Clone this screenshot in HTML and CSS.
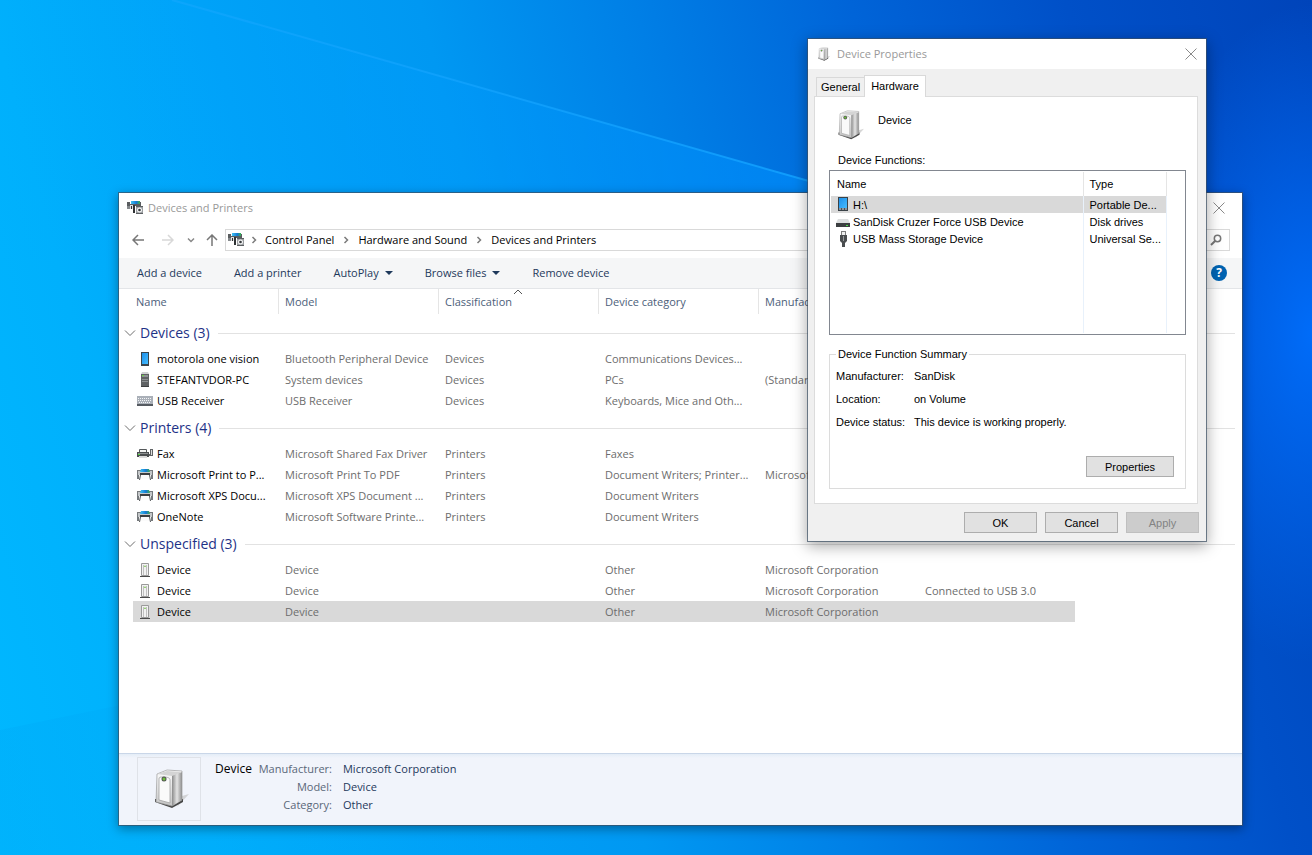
FILE: index.html
```html
<!DOCTYPE html>
<html lang="en">
<head>
    <meta charset="UTF-8">
    <meta name="viewport" content="width=device-width, initial-scale=1.0">
    <title>Devices and Printers</title>
    <link rel="stylesheet" href="styles.css">
</head>
<body>

    <!-- shared icons -->
    <svg class="sprite" aria-hidden="true">
        <defs>
            <linearGradient id="blue-screen" x1="0" y1="0" x2="1" y2="1">
                <stop offset="0" stop-color="#1e8fe8"/>
                <stop offset="1" stop-color="#45bcff"/>
            </linearGradient>
            <linearGradient id="metal" x1="0" y1="0" x2="0" y2="1">
                <stop offset="0" stop-color="#ffffff"/>
                <stop offset="1" stop-color="#c4c4c4"/>
            </linearGradient>
            <linearGradient id="metal-side" x1="0" y1="0" x2="1" y2="0">
                <stop offset="0" stop-color="#8c8c8c"/>
                <stop offset="0.5" stop-color="#e4e4e4"/>
                <stop offset="1" stop-color="#8f8f8f"/>
            </linearGradient>
            <linearGradient id="paper" x1="0" y1="0" x2="1" y2="0">
                <stop offset="0" stop-color="#3fc3f2"/>
                <stop offset="0.6" stop-color="#1477d4"/>
                <stop offset="1" stop-color="#3cb34a"/>
            </linearGradient>
        </defs>
        <symbol id="i-hub" viewBox="0 0 16 16">
            <rect x="4" y="1" width="9" height="3" fill="url(#paper)"/>
            <path d="M0 2h3v2h10V2h1v4H0z" fill="#5a5d60"/>
            <path d="M0 6h3v3H0z" fill="#85898c"/>
            <path d="M3 5h3v4H3z" fill="#dfe1e2"/>
            <rect x="6" y="5" width="2" height="8" fill="#2f3234"/>
            <rect x="4" y="6" width="1" height="3" fill="#2f3234"/>
            <rect x="9" y="6" width="7" height="8" fill="#9a9da0"/>
            <path d="M9 6h7v1H9zM9 13h7v1H9z" fill="#5c5f62"/>
            <circle cx="12.500" cy="10" r="2.500" fill="#f4f5f5"/>
            <circle cx="12.500" cy="10" r="1.300" fill="#35383b"/>
        </symbol>
        <symbol id="i-phone" viewBox="0 0 16 16">
            <rect x="4" y="1" width="8" height="14" fill="#3a444b"/>
            <rect x="5" y="2" width="6" height="11" fill="url(#blue-screen)"/>
        </symbol>
        <symbol id="i-pc" viewBox="0 0 16 16">
            <path d="M4 2l1-2h6l1 2z" fill="#cfd1d2"/>
            <rect x="4" y="2" width="8" height="13" fill="#5f6264"/>
            <path d="M5 3h6v2H5zM5 7h6v1H5zM5 9h6v1H5z" fill="#8d9193"/>
            <rect x="5" y="3" width="2" height="1" fill="#67d443"/>
            <rect x="4" y="14" width="8" height="1" fill="#3d3f40"/>
        </symbol>
        <symbol id="i-keyboard" viewBox="0 0 16 16">
            <rect x="0" y="3" width="16" height="9" fill="#aab0b8"/>
            <path d="M1 5.500h14M1 7.500h14M2 9.500h12" stroke="#f4f5f7" stroke-dasharray="1 1"/>
            <rect x="0" y="11" width="16" height="2" fill="#555a61"/>
        </symbol>
        <symbol id="i-fax" viewBox="0 0 16 16">
            <path d="M2.500 3.500h7v3h-7z" fill="#f2f3f3" stroke="#54585a"/>
            <path d="M0 6h12v5H0z" fill="#4a4d4f"/>
            <path d="M1 7h10v1H1z" fill="#8b8f91"/>
            <rect x="2" y="10" width="8" height="2" fill="#dadada"/>
            <rect x="1" y="8" width="2" height="1" fill="#5ad644"/>
            <path d="M12 8h1V3h3v7h-4z" fill="#606365"/>
            <rect x="14" y="4" width="1" height="5" fill="#dcdcdc"/>
        </symbol>
        <symbol id="i-printer" viewBox="0 0 16 16">
            <path d="M0 3h4v1H2v8H0zM12 3h4v9h-2V4h-2z" fill="#75797c"/>
            <path d="M1 4h14v4H1z" fill="#c3c6c8"/>
            <path d="M4 2h8l1 3H3z" fill="url(#paper)"/>
            <path d="M3 6h10v2H3z" fill="#3b3e40"/>
            <path d="M4 8h8l1 4H3z" fill="#fbfbfb"/>
            <path d="M3 8l1 0-1 5H2zM12 8h1l1 5h-1z" fill="#55585a"/>
        </symbol>
        <symbol id="i-drivebox" viewBox="0 0 16 16">
            <path d="M4.500 1.500h7v12h-7z" fill="#f2f2f2" stroke="#9a9a9a"/>
            <path d="M6 3h1v10H6zM9 3h1v10H9z" fill="#c0c0c0"/>
            <path d="M7 5l1-2 1 2z" fill="#7ac74c"/>
            <path d="M3 14h10v1H3z" fill="#4b4b4b"/>
        </symbol>
        <symbol id="i-box" viewBox="0 0 36 40">
            <path d="M24 38l12-13-7 2z" fill="#c5c5c5" opacity=".7"/>
            <path d="M2 33l17 6 11-6v-3H2z" fill="#474747"/>
            <path d="M4 5L14 1l15 1v29l-10 6-16-4z" fill="url(#metal)" stroke="#9a9a9a" stroke-width=".7"/>
            <path d="M19 6l10-3v28l-10 6z" fill="url(#metal-side)"/>
            <path d="M4 5l15 2 10-4-15-1z" fill="#d4d4d4"/>
            <path d="M6 10c0-2 1-2 4-2 5 0 7 1 7 3v23L6 31z" fill="#fafafa" stroke="#a2a2a2" stroke-width=".8"/>
            <circle cx="11" cy="10" r="2.500" fill="#555"/>
            <circle cx="11" cy="10" r="1.500" fill="#6fc23c"/>
        </symbol>
        <symbol id="i-portable" viewBox="0 0 16 16">
            <rect x="3" y="0" width="10" height="14" fill="#3a4248"/>
            <rect x="4" y="1" width="8" height="10" fill="url(#blue-screen)"/>
            <path d="M4 11h8v2H4z" fill="#8f969b"/>
            <path d="M6 11h1v2H6zM9 11h1v2H9z" fill="#4a5157"/>
        </symbol>
        <symbol id="i-disk" viewBox="0 0 16 16">
            <path d="M3 5h10l2 4H1z" fill="#dcdedf"/>
            <rect x="1" y="9" width="14" height="4" fill="#3c3f41"/>
            <rect x="11" y="11" width="2" height="1" fill="#4be04b"/>
        </symbol>
        <symbol id="i-usb" viewBox="0 0 16 16">
            <rect x="6.500" y=".5" width="4" height="4" fill="#f0f0f0" stroke="#7e7e7e"/>
            <path d="M5 4h7v6l-2 2v4H7v-4l-2-2z" fill="#4a4d4f"/>
            <path d="M8 5h1v5H8z" fill="#9a9d9f"/>
        </symbol>
        <symbol id="i-close" viewBox="0 0 12 12">
            <path d="M.5.5l11 11M11.500.5l-11 11" fill="none" stroke="#8a8a8a"/>
        </symbol>
        <symbol id="i-down" viewBox="0 0 12 12">
            <path d="M1 3.500l5 5 5-5" fill="none" stroke="#6e6e6e"/>
        </symbol>
        <symbol id="i-right" viewBox="0 0 8 8">
            <path d="M2.500 1l3 3-3 3" fill="none" stroke="#7b7b7b" stroke-width="1.500"/>
        </symbol>
        <symbol id="i-caret" viewBox="0 0 8 4">
            <path d="M0 0h8L4 4z" fill="#1e395b"/>
        </symbol>
    </svg>

    <svg class="wallpaper" viewBox="0 0 1312 855" preserveAspectRatio="none" aria-hidden="true">
        <defs>
            <linearGradient id="beam" x1="0" y1="0" x2="1" y2="0">
                <stop offset="0" stop-color="#18a8ff" stop-opacity="0.5"/>
                <stop offset="1" stop-color="#12a0ff" stop-opacity="0.9"/>
            </linearGradient>
            <linearGradient id="below-beam" x1="0" y1="0" x2="1" y2="0">
                <stop offset="0" stop-color="#00a8ff" stop-opacity="0"/>
                <stop offset="1" stop-color="#0090ff" stop-opacity="0.6"/>
            </linearGradient>
            <linearGradient id="low-beam" x1="0" y1="0" x2="1" y2="0">
                <stop offset="0" stop-color="#00a4f4" stop-opacity="0.25"/>
                <stop offset="1" stop-color="#00a4f4" stop-opacity="0"/>
            </linearGradient>
        </defs>
        <path d="M172 0L830 187V260H0V0z" fill="url(#below-beam)"/>
        <path d="M172 0L830 187" stroke="url(#beam)" stroke-width="2"/>
        <path d="M0 730L300 668H600V855H0z" fill="url(#low-beam)"/>
    </svg>

    <main class="window explorer">
        <header class="titlebar">
            <svg class="icon"><use href="#i-hub"/></svg>
            <h1>Devices and Printers</h1>
            <button class="close" aria-label="Close"><svg><use href="#i-close"/></svg></button>
        </header>

        <nav class="navbar">
            <button class="arrow" aria-label="Back"><svg viewBox="0 0 12 12"><path d="M12 6H1M6 1L1 6l5 5" fill="none" stroke="#777" stroke-width="1.500"/></svg></button>
            <button class="arrow forward" aria-label="Forward"><svg viewBox="0 0 12 12"><path d="M0 6h11M6 1l5 5-5 5" fill="none" stroke="#d8d8d8" stroke-width="1.500"/></svg></button>
            <button class="arrow recent" aria-label="Recent locations"><svg viewBox="0 0 8 8"><path d="M1 2.500l3 3 3-3" fill="none" stroke="#888" stroke-width="1.500"/></svg></button>
            <button class="arrow" aria-label="Up"><svg viewBox="0 0 12 12"><path d="M6 12V1M1 6l5-5 5 5" fill="none" stroke="#777" stroke-width="1.500"/></svg></button>
            <div class="address">
                <svg class="icon"><use href="#i-hub"/></svg>
                <svg class="chevron"><use href="#i-right"/></svg>
                <a href="#">Control Panel</a>
                <svg class="chevron"><use href="#i-right"/></svg>
                <a href="#">Hardware and Sound</a>
                <svg class="chevron"><use href="#i-right"/></svg>
                <a href="#">Devices and Printers</a>
            </div>
            <div class="search">
                <input type="search" aria-label="Search Devices and Printers">
                <button aria-label="Search"><svg viewBox="0 0 12 12"><circle cx="7.500" cy="4.500" r="3.200" fill="none" stroke="#777" stroke-width="1.500"/><path d="M5.300 6.700L1 11" stroke="#777" stroke-width="2"/></svg></button>
            </div>
        </nav>

        <div class="toolbar">
            <button>Add a device</button>
            <button>Add a printer</button>
            <button>AutoPlay <svg class="caret"><use href="#i-caret"/></svg></button>
            <button>Browse files <svg class="caret"><use href="#i-caret"/></svg></button>
            <button>Remove device</button>
            <button class="help" aria-label="Help">?</button>
        </div>

        <div class="content">
            <table class="devices">
                <colgroup>
                    <col class="gutter">
                    <col class="name">
                    <col class="field">
                    <col class="field">
                    <col class="field">
                    <col class="field">
                    <col class="status">
                    <col>
                </colgroup>
                <thead>
                    <tr>
                        <td></td>
                        <th>Name</th>
                        <th>Model</th>
                        <th>Classification<svg class="sort" viewBox="0 0 8 4"><path d="M0 4l4-4 4 4" fill="none" stroke="#555"/></svg></th>
                        <th>Device category</th>
                        <th>Manufacturer</th>
                        <th>Status</th>
                        <td></td>
                    </tr>
                </thead>
                <tbody>
                    <tr class="group"><th colspan="8"><div><svg><use href="#i-down"/></svg>Devices (3)</div></th></tr>
                    <tr>
                        <td></td>
                        <td class="device"><svg class="icon"><use href="#i-phone"/></svg>motorola one vision</td>
                        <td>Bluetooth Peripheral Device</td>
                        <td>Devices</td>
                        <td>Communications Devices...</td>
                        <td></td>
                        <td></td>
                    </tr>
                    <tr>
                        <td></td>
                        <td class="device"><svg class="icon"><use href="#i-pc"/></svg>STEFANTVDOR-PC</td>
                        <td>System devices</td>
                        <td>Devices</td>
                        <td>PCs</td>
                        <td>(Standard</td>
                        <td></td>
                    </tr>
                    <tr>
                        <td></td>
                        <td class="device"><svg class="icon"><use href="#i-keyboard"/></svg>USB Receiver</td>
                        <td>USB Receiver</td>
                        <td>Devices</td>
                        <td>Keyboards, Mice and Oth...</td>
                        <td></td>
                        <td></td>
                    </tr>
                </tbody>
                <tbody>
                    <tr class="group"><th colspan="8"><div><svg><use href="#i-down"/></svg>Printers (4)</div></th></tr>
                    <tr>
                        <td></td>
                        <td class="device"><svg class="icon"><use href="#i-fax"/></svg>Fax</td>
                        <td>Microsoft Shared Fax Driver</td>
                        <td>Printers</td>
                        <td>Faxes</td>
                        <td></td>
                        <td></td>
                    </tr>
                    <tr>
                        <td></td>
                        <td class="device"><svg class="icon"><use href="#i-printer"/></svg>Microsoft Print to P...</td>
                        <td>Microsoft Print To PDF</td>
                        <td>Printers</td>
                        <td>Document Writers; Printer...</td>
                        <td>Microsoft</td>
                        <td></td>
                    </tr>
                    <tr>
                        <td></td>
                        <td class="device"><svg class="icon"><use href="#i-printer"/></svg>Microsoft XPS Docu...</td>
                        <td>Microsoft XPS Document ...</td>
                        <td>Printers</td>
                        <td>Document Writers</td>
                        <td></td>
                        <td></td>
                    </tr>
                    <tr>
                        <td></td>
                        <td class="device"><svg class="icon"><use href="#i-printer"/></svg>OneNote</td>
                        <td>Microsoft Software Printe...</td>
                        <td>Printers</td>
                        <td>Document Writers</td>
                        <td></td>
                        <td></td>
                    </tr>
                </tbody>
                <tbody>
                    <tr class="group"><th colspan="8"><div><svg><use href="#i-down"/></svg>Unspecified (3)</div></th></tr>
                    <tr>
                        <td></td>
                        <td class="device"><svg class="icon"><use href="#i-drivebox"/></svg>Device</td>
                        <td>Device</td>
                        <td></td>
                        <td>Other</td>
                        <td>Microsoft Corporation</td>
                        <td></td>
                    </tr>
                    <tr>
                        <td></td>
                        <td class="device"><svg class="icon"><use href="#i-drivebox"/></svg>Device</td>
                        <td>Device</td>
                        <td></td>
                        <td>Other</td>
                        <td>Microsoft Corporation</td>
                        <td>Connected to USB 3.0</td>
                    </tr>
                    <tr class="selected">
                        <td></td>
                        <td class="device"><svg class="icon"><use href="#i-drivebox"/></svg>Device</td>
                        <td>Device</td>
                        <td></td>
                        <td>Other</td>
                        <td>Microsoft Corporation</td>
                        <td></td>
                    </tr>
                </tbody>
            </table>
        </div>

        <footer class="details">
            <div class="thumb"><svg><use href="#i-box"/></svg></div>
            <h2>Device</h2>
            <dl>
                <dt>Manufacturer:</dt><dd>Microsoft Corporation</dd>
                <dt>Model:</dt><dd>Device</dd>
                <dt>Category:</dt><dd>Other</dd>
            </dl>
        </footer>
    </main>

    <section class="window dialog" role="dialog" aria-labelledby="dialog-title">
        <header class="titlebar">
            <svg class="icon small"><use href="#i-box"/></svg>
            <h1 id="dialog-title">Device Properties</h1>
            <button class="close" aria-label="Close"><svg><use href="#i-close"/></svg></button>
        </header>

        <div class="tabs" role="tablist">
            <button role="tab" aria-selected="false">General</button>
            <button role="tab" aria-selected="true" class="active">Hardware</button>
        </div>

        <div class="panel" role="tabpanel">
            <div class="heading">
                <svg><use href="#i-box"/></svg>
                <p>Device</p>
            </div>

            <p class="list-label" id="functions-label">Device Functions:</p>
            <div class="listbox">
                <table aria-labelledby="functions-label">
                    <thead>
                        <tr><th>Name</th><th>Type</th></tr>
                    </thead>
                    <tbody>
                        <tr class="selected"><td><svg class="icon"><use href="#i-portable"/></svg>H:\</td><td>Portable De...</td></tr>
                        <tr><td><svg class="icon"><use href="#i-disk"/></svg>SanDisk Cruzer Force USB Device</td><td>Disk drives</td></tr>
                        <tr><td><svg class="icon"><use href="#i-usb"/></svg>USB Mass Storage Device</td><td>Universal Se...</td></tr>
                        <tr class="rest"><td></td><td></td></tr>
                    </tbody>
                </table>
            </div>

            <fieldset>
                <legend>Device Function Summary</legend>
                <dl>
                    <dt>Manufacturer:</dt><dd>SanDisk</dd>
                    <dt>Location:</dt><dd>on Volume</dd>
                    <dt>Device status:</dt><dd>This device is working properly.</dd>
                </dl>
                <button class="btn wide">Properties</button>
            </fieldset>
        </div>

        <div class="actions">
            <button class="btn">OK</button>
            <button class="btn">Cancel</button>
            <button class="btn" disabled>Apply</button>
        </div>
    </section>

</body>
</html>
```
FILE: styles.css
```css
* {
    box-sizing: border-box;
}

body {
    margin: 0;
    min-height: 100vh;
    position: relative;
    overflow: hidden;
    font-family: "Open Sans", "Noto Sans", sans-serif;
    font-size: 11px;
    line-height: 18px;
    color: #000;
    background:
        radial-gradient(ellipse 170px 330px at 100% 39%, rgba(0, 112, 255, 0.9), rgba(0, 100, 255, 0)),
        linear-gradient(75deg, #00b8ff 0%, #00b0fc 14%, #00a2f8 28%, #0098f2 42%, #007fe6 56%, #0064d8 70%, #0050c8 84%, #0044ba 100%);
}

h1, h2, p, dl, dd {
    margin: 0;
    font-weight: normal;
}

button, input {
    font: inherit;
    color: inherit;
    background: none;
    border: none;
    padding: 0;
    margin: 0;
}

svg {
    display: block;
    flex: none;
}

.sprite {
    position: absolute;
    width: 0;
    height: 0;
}

.wallpaper {
    position: absolute;
    width: 100%;
    height: 100%;
}

.icon {
    width: 16px;
    height: 16px;
}

/* windows */

.window {
    position: absolute;
    display: flex;
    flex-direction: column;
    background: #fff;
    border: 1px solid rgba(60, 80, 100, 0.7);
    background-clip: padding-box;
}

.explorer {
    top: 192px;
    right: 69px;
    bottom: 29px;
    left: 118px;
    box-shadow: 0 3px 10px rgba(0, 0, 0, 0.35);
}

.dialog {
    top: 38px;
    right: 105px;
    width: 400px;
    background-color: #f0f0f0;
    box-shadow: 0 4px 14px rgba(0, 0, 0, 0.35);
    font-family: "Liberation Sans", Arial, sans-serif;
    line-height: 16px;
}

.titlebar {
    display: flex;
    align-items: center;
    height: 30px;
    padding: 0 17px 0 8px;
    background: #fff;
    font-family: "Open Sans", "Noto Sans", sans-serif;
}

.titlebar h1 {
    margin-left: 5px;
    font-size: 11px;
    color: #999;
}

.close {
    margin-left: auto;
}

.close svg {
    width: 12px;
    height: 12px;
}

/* address row */

.navbar {
    display: flex;
    align-items: center;
    height: 34px;
    padding: 0 12px 0 13px;
}

.arrow svg {
    width: 12px;
    height: 12px;
}

.forward {
    margin-left: 18px;
}

.recent {
    margin: 0 11px 0 13px;
}

.recent svg {
    width: 8px;
    height: 8px;
}

.address {
    display: flex;
    align-items: center;
    flex: 1;
    height: 22px;
    margin-left: 7px;
    padding-left: 2px;
    border: 1px solid #d9d9d9;
}

.address a {
    color: #000;
    text-decoration: none;
}

.chevron {
    width: 8px;
    height: 8px;
    margin: 0 8px;
}

.address .icon + .chevron {
    margin: 0 7px 0 6px;
}

.search {
    display: flex;
    align-items: center;
    width: 190px;
    height: 22px;
    margin-left: 12px;
    padding-right: 7px;
    border: 1px solid #d9d9d9;
}

.search input {
    flex: 1;
    min-width: 0;
}

.search svg {
    width: 12px;
    height: 12px;
}

/* command bar */

.toolbar {
    display: flex;
    align-items: center;
    gap: 32px;
    height: 32px;
    padding: 0 15px 0 18px;
    background: #f5f6f7;
    border-top: 1px solid #fff;
    border-bottom: 1px solid #e3e5e8;
    color: #1e395b;
}

.toolbar button {
    display: flex;
    align-items: center;
}

.caret {
    width: 8px;
    height: 4px;
    margin-left: 6px;
}

.toolbar .help {
    justify-content: center;
    width: 16px;
    height: 16px;
    margin-left: auto;
    border-radius: 50%;
    background: #0063b1;
    color: #fff;
    font-size: 12px;
    font-weight: bold;
}

/* device list */

.content {
    flex: 1;
    min-height: 0;
    overflow: hidden;
}

.devices {
    width: 100%;
    table-layout: fixed;
    border-collapse: collapse;
    color: #6d6d6d;
    white-space: nowrap;
}

.devices .gutter {
    width: 14px;
}

.devices .name {
    width: 145px;
}

.devices .field {
    width: 160px;
}

.devices .status {
    width: 157px;
}

.devices th,
.devices td {
    height: 21px;
    padding: 0 0 0 7px;
    text-align: left;
    font-weight: normal;
}

.devices thead th {
    position: relative;
    height: 27px;
    padding-bottom: 2px;
    color: #4c607a;
    background: linear-gradient(#e5e5e5, #e5e5e5) left top / 1px 25px no-repeat;
}

.devices thead th:nth-child(2) {
    padding-left: 3px;
    background: none;
}

.sort {
    position: absolute;
    top: 1px;
    left: calc(50% - 4px);
    width: 8px;
    height: 4px;
}

.devices .group th {
    height: 32px;
    padding: 2px 7px 0 5px;
    font-size: 14px;
    color: #1e3287;
}

.group div {
    display: flex;
    align-items: center;
    gap: 4px;
}

.group div::after {
    content: "";
    flex: 1;
    height: 1px;
    margin-left: 4px;
    background: #e2e2e2;
}

.group svg {
    width: 12px;
    height: 12px;
}

.devices .device {
    padding-left: 24px;
    color: #000;
}

.device .icon {
    float: left;
    margin: 1px 4px 0 -20px;
}

.devices .selected td:not(:first-child) {
    background: #d9d9d9;
}

/* details pane */

.details {
    display: flex;
    align-items: flex-start;
    gap: 4px;
    height: 72px;
    padding: 3px 18px;
    background: linear-gradient(#e4edf7, #f1f4fb 4px);
    border-top: 1px solid #c9d6e8;
}

.thumb {
    display: flex;
    align-items: center;
    justify-content: center;
    width: 64px;
    height: 64px;
    padding-left: 4px;
    border: 1px solid #dfe2e8;
}

.thumb svg {
    width: 36px;
    height: 40px;
}

.details h2 {
    margin: 3px 0 0 10px;
    font-size: 12px;
}

.details dl {
    display: grid;
    grid-template-columns: 76px auto;
    column-gap: 11px;
    margin-top: 3px;
}

.details dt {
    color: #5a6779;
    text-align: right;
}

.details dd {
    color: #1e395b;
}

/* properties dialog */

.dialog .titlebar {
    padding: 0 9px;
}

.dialog .icon.small {
    width: 14px;
    height: 14px;
    margin-right: 1px;
}

.tabs {
    display: flex;
    align-items: flex-end;
    height: 27px;
    padding-left: 8px;
}

.tabs button {
    height: 19px;
    padding: 0 4px;
    border: 1px solid #d9d9d9;
    border-bottom: none;
    border-right: none;
}

.tabs .active {
    position: relative;
    height: 22px;
    margin-bottom: -1px;
    padding: 0 6px 1px;
    background: #fff;
    border-right: 1px solid #d9d9d9;
}

.panel {
    margin: 0 8px 0 6px;
    padding: 12px 11px 14px 14px;
    background: #fff;
    border: 1px solid #dcdcdc;
}

.heading {
    display: flex;
    gap: 14px;
    height: 43px;
    padding-left: 8px;
}

.heading svg {
    width: 27px;
    height: 30px;
    margin-top: 1px;
}

.heading p {
    padding-top: 3px;
}

.list-label {
    padding-left: 9px;
}

.listbox {
    margin-top: 2px;
    padding: 1px 18px 1px 1px;
    border: 1px solid #828790;
}

.listbox table {
    width: 100%;
    table-layout: fixed;
    border-collapse: collapse;
    white-space: nowrap;
}

.listbox th,
.listbox td {
    height: 17px;
    padding: 0 0 0 6px;
    text-align: left;
    font-weight: normal;
    border-right: 1px solid #e8f1fb;
}

.listbox th {
    height: 24px;
    border-color: #e5e5e5;
}

.listbox th:first-child {
    width: 252px;
}

.listbox .selected {
    background: #d9d9d9;
}

.listbox td:first-child {
    padding-left: 4px;
}

.listbox .icon {
    float: left;
    margin-right: 2px;
}

.listbox .rest td {
    height: 86px;
}

fieldset {
    margin: 11px 0 0;
    padding: 3px 11px 11px 6px;
    border: 1px solid #dcdcdc;
}

legend {
    padding: 0 2px;
}

fieldset dl {
    display: grid;
    grid-template-columns: 78px 1fr;
    line-height: 23px;
}

.btn {
    width: 73px;
    height: 21px;
    background: #e1e1e1;
    border: 1px solid #adadad;
}

.btn:disabled {
    background: #ccc;
    border-color: #bfbfbf;
    color: #838383;
}

.btn.wide {
    display: block;
    width: 88px;
    margin: 22px 0 0 auto;
}

.actions {
    display: flex;
    justify-content: flex-end;
    gap: 8px;
    padding: 8px 7px;
}
```
